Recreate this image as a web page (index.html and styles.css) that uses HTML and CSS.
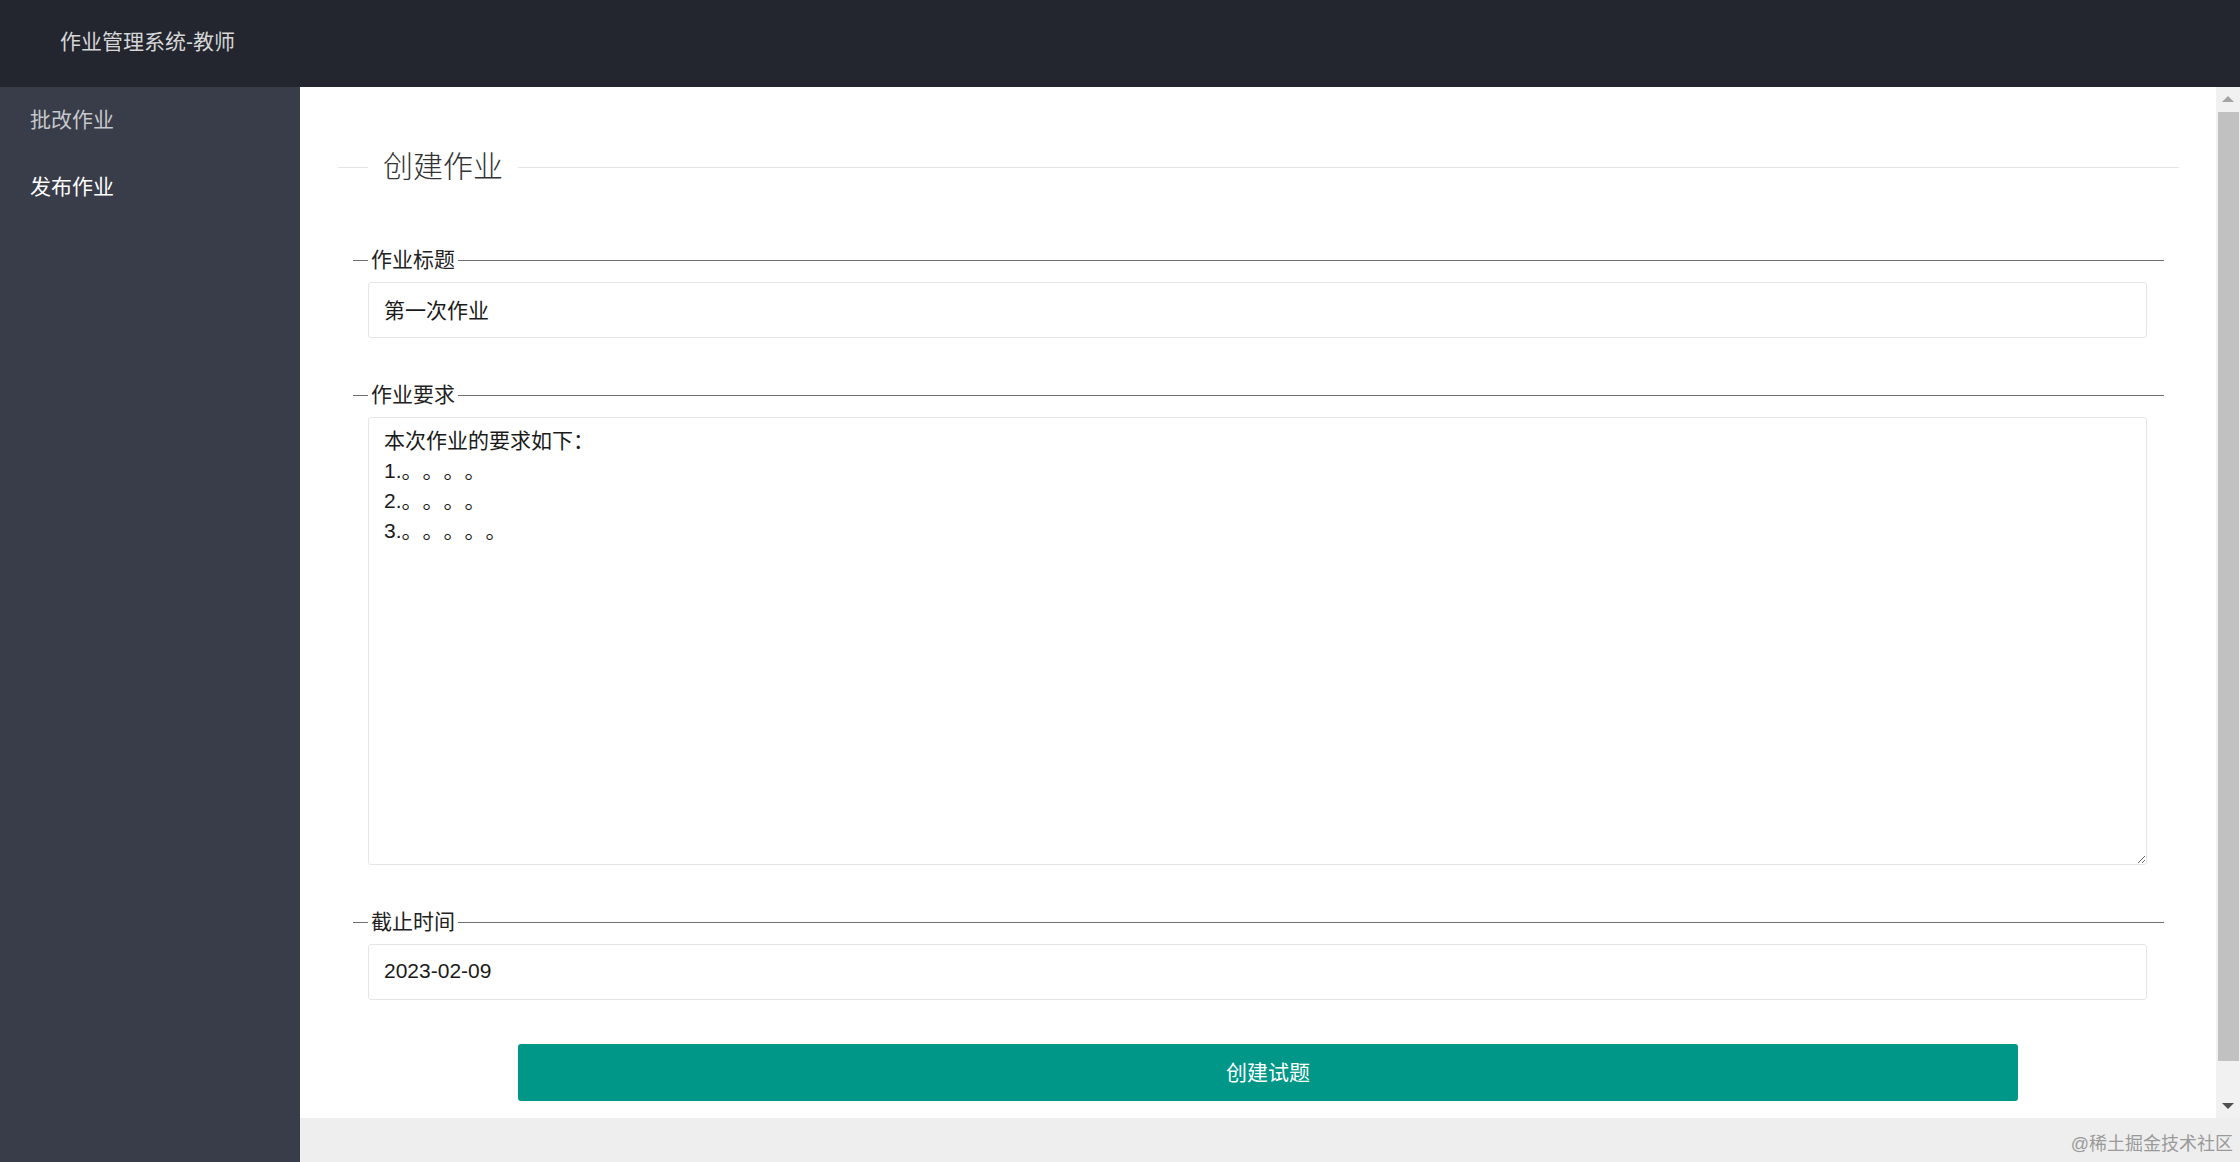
FILE: index.html
```html
<!DOCTYPE html>
<html>
<head>
  <meta charset="utf-8">
  <title>作业管理系统-教师</title>
  <link rel="stylesheet" href="styles.css">
</head>
<body>
  <div class="layout">
    <header class="topbar">
      <div class="logo">作业管理系统-教师</div>
    </header>
    <div class="frame">
      <aside class="side">
        <ul class="nav">
          <li><a href="#">批改作业</a></li>
          <li class="this"><a href="#">发布作业</a></li>
        </ul>
      </aside>
      <div class="body-col">
        <div class="body-view">
          <main class="content">
            <div class="page-title"><span>创建作业</span></div>
            <form id="homeworkForm" class="hw-form">
              <fieldset class="field">
                <legend>作业标题</legend>
                <input type="text" class="hw-input" value="第一次作业">
              </fieldset>
              <fieldset class="field field-gap">
                <legend>作业要求</legend>
                <textarea class="hw-textarea">本次作业的要求如下：
1.。。。。
2.。。。。
3.。。。。。</textarea>
              </fieldset>
              <fieldset class="field field-gap">
                <legend>截止时间</legend>
                <input type="text" class="hw-input" value="2023-02-09">
              </fieldset>
              <button type="button" class="hw-btn">创建试题</button>
            </form>
          </main>
          <div class="scrollbar">
            <span class="sb-btn"><i class="sb-up"></i></span>
            <span class="sb-thumb"></span>
            <span class="sb-track"></span>
            <span class="sb-btn"><i class="sb-down"></i></span>
          </div>
        </div>
        <footer class="footer">
          <span class="mark">@稀土掘金技术社区</span>
        </footer>
      </div>
    </div>
  </div>
</body>
</html>
```

FILE: styles.css
```css
* {
  box-sizing: border-box;
}
body {
  margin: 0;
  font-family: "Liberation Sans", "Noto Sans CJK SC", sans-serif;
  font-size: 21px;
  color: #333;
  text-spacing-trim: space-all;
}
.layout {
  display: flex;
  flex-direction: column;
  height: 100vh;
}
.topbar {
  height: 87px;
  flex: none;
  display: flex;
  align-items: center;
  padding-left: 60px;
  background: #23262e;
}
.logo {
  font-size: 21px;
  line-height: 1;
  color: rgba(255, 255, 255, .82);
  padding-bottom: 4px;
}
.frame {
  flex: 1;
  display: flex;
  min-height: 0;
}
.side {
  width: 300px;
  flex: none;
  background: #393d49;
}
.nav {
  list-style: none;
  margin: 0;
  padding: 0;
}
.nav a {
  display: block;
  height: 67px;
  line-height: 65px;
  padding-left: 30px;
  font-size: 21px;
  color: rgba(255, 255, 255, .72);
  text-decoration: none;
}
.nav .this a {
  color: #fff;
}
.body-col {
  flex: 1;
  min-width: 0;
  display: flex;
  flex-direction: column;
}
.body-view {
  flex: 1;
  min-height: 0;
  display: flex;
  overflow: hidden;
  background: #fff;
}
.content {
  flex: 1;
  min-width: 0;
  padding-top: 60px;
}

/* page title with rule */
.page-title {
  display: flex;
  align-items: center;
  margin: 0 37px 0 38px;
  height: 40px;
}
.page-title:before,
.page-title:after {
  content: "";
  height: 1px;
  background: #e6e6e6;
}
.page-title:before {
  width: 30px;
}
.page-title:after {
  flex: 1;
}
.page-title span {
  padding: 0 15px;
  font-size: 30px;
  line-height: 40px;
  font-weight: 300;
  color: #333;
}

/* form */
.hw-form {
  margin: 0;
}
.field {
  margin: 59px 52px 0 53px;
  padding: 8px 17px 0 15px;
  border: 0;
  border-top: 1px solid #707070;
  min-width: 0;
}
.field-gap {
  margin-top: 43px;
}
.field legend {
  padding: 0 3px;
  font-size: 21px;
  line-height: 28px;
  color: #222;
}
.hw-input,
.hw-textarea {
  display: block;
  width: 100%;
  border: 1px solid #e6e6e6;
  border-radius: 3px;
  background: #fff;
  font-family: "Liberation Sans", "Noto Sans CJK SC", sans-serif;
  font-size: 21px;
  color: #1a1a1a;
  outline: none;
  text-spacing-trim: space-all;
}
.hw-input {
  height: 56px;
  padding: 0 15px 2px;
}
.hw-textarea {
  height: 448px;
  padding: 8px 15px;
  line-height: 30px;
  resize: vertical;
}
.hw-btn {
  display: block;
  width: 1500px;
  height: 57px;
  margin: 44px 0 0 218px;
  padding: 0 0 4px;
  border: 0;
  border-radius: 3px;
  background: #009688;
  color: #fff;
  font-family: "Liberation Sans", "Noto Sans CJK SC", sans-serif;
  font-size: 21px;
  cursor: pointer;
}

/* scrollbar look-alike */
.scrollbar {
  width: 24px;
  flex: none;
  display: flex;
  flex-direction: column;
  background: #f1f1f1;
}
.sb-btn {
  height: 24px;
  flex: none;
  display: flex;
  align-items: center;
  justify-content: center;
}
.sb-up {
  border-left: 6px solid transparent;
  border-right: 6px solid transparent;
  border-bottom: 6px solid #a3a3a3;
}
.sb-down {
  border-left: 6px solid transparent;
  border-right: 6px solid transparent;
  border-top: 6px solid #505050;
}
.sb-thumb {
  height: 949px;
  flex: none;
  margin: 1px 1px 0 2px;
  background: #c1c1c1;
}
.sb-track {
  flex: 1;
}

.footer {
  height: 44px;
  flex: none;
  display: flex;
  justify-content: flex-end;
  align-items: flex-end;
  padding: 0 7px 6px 0;
  background: #eee;
}
.mark {
  font-size: 18px;
  line-height: 24px;
  color: #9a9a9a;
}
```
